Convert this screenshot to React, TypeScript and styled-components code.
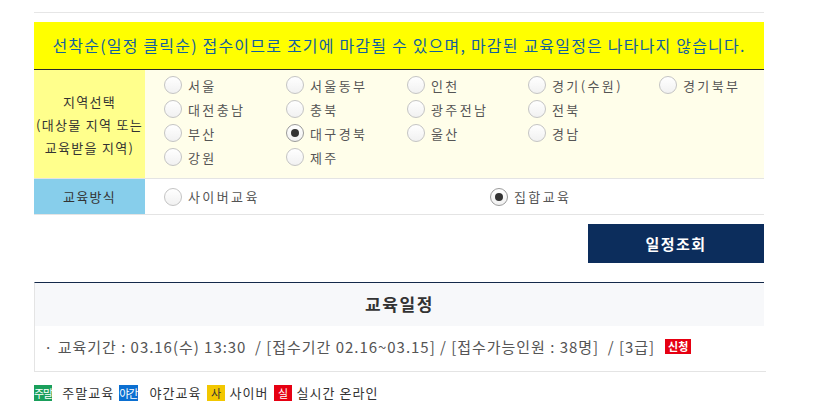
import React from "react";
import styled, { createGlobalStyle } from "styled-components";

const Global = createGlobalStyle`
  html, body { margin: 0; padding: 0; background: #fff; }
  body { font-family: "Noto Sans CJK KR", "Noto Sans", sans-serif; color: #333; overflow: hidden; letter-spacing: 0.1em; }
`;

const Page = styled.div`
  width: 730px;
  margin-left: 34px;
  padding-top: 12px;
`;

const TopRule = styled.div`
  height: 1px;
  background: #e6e6e6;
  margin-bottom: 9px;
`;

const Notice = styled.div`
  height: 48px;
  background: #ffff00;
  display: flex;
  align-items: center;
  justify-content: center;
  font-size: 16px;
  letter-spacing: 1.2px;
  color: #12609f;
  border-bottom: 1px solid #2b2b2b;
  padding-bottom: 1px;
  box-sizing: border-box;
`;

const FormRow = styled.div<{ $height: number }>`
  display: grid;
  grid-template-columns: 111px 1fr;
  height: ${(p) => p.$height}px;
  border-bottom: 1px solid #e4e4e4;
`;

const LabelCell = styled.div<{ $tone: "yellow" | "blue" }>`
  background: ${(p) => (p.$tone === "yellow" ? "#ffff8c" : "#87ceeb")};
  display: flex;
  align-items: center;
  justify-content: center;
  text-align: center;
  font-size: 13px;
  line-height: 23px;
  color: #333;
  letter-spacing: 1.3px;
  white-space: nowrap;
`;

const ValueCell = styled.div<{ $tone: "cream" | "white" }>`
  background: ${(p) => (p.$tone === "cream" ? "#fffeea" : "#fff")};
  padding: ${(p) => (p.$tone === "cream" ? "3px 0 0 19px" : "0 0 0 19px")};
  display: flex;
  flex-direction: column;
  justify-content: ${(p) => (p.$tone === "cream" ? "flex-start" : "center")};
`;

const OptionLine = styled.div<{ $cols: string }>`
  display: grid;
  grid-template-columns: ${(p) => p.$cols};
  height: 24px;
  align-items: center;
`;

const Option = styled.label`
  display: flex;
  align-items: center;
  gap: 6px;
  font-size: 13px;
  color: #555;
  cursor: pointer;
  letter-spacing: 2.4px;
  white-space: nowrap;
`;

const RadioCircle = styled.span<{ $checked: boolean }>`
  width: 18px;
  height: 18px;
  flex: none;
  box-sizing: border-box;
  border-radius: 50%;
  border: 1px solid ${(p) => (p.$checked ? "#9a9a9a" : "#c4c4c4")};
  background: linear-gradient(#ffffff, #f1f1f1);
  display: flex;
  align-items: center;
  justify-content: center;
  &::after {
    content: "";
    width: 8px;
    height: 8px;
    border-radius: 50%;
    background: #333;
    display: ${(p) => (p.$checked ? "block" : "none")};
  }
`;

const ButtonRow = styled.div`
  display: flex;
  justify-content: flex-end;
  padding-top: 9px;
`;

const SearchButton = styled.button`
  width: 176px;
  height: 39px;
  border: none;
  background: #0c2d5c;
  color: #fff;
  font-family: inherit;
  font-size: 15px;
  font-weight: 700;
  letter-spacing: 0.1em;
  cursor: pointer;
`;

const ScheduleBox = styled.div`
  margin-top: 19px;
  border-top: 1px solid #14294a;
  border-left: 1px solid #e4e4e4;
`;

const ScheduleHead = styled.div`
  height: 43px;
  box-sizing: border-box;
  padding-bottom: 3px;
  background: #f7f8fa;
  display: flex;
  align-items: center;
  justify-content: center;
  font-size: 17px;
  font-weight: 700;
  color: #333;
`;

const ScheduleItem = styled.div`
  height: 46px;
  box-sizing: border-box;
  padding-bottom: 4px;
  border-bottom: 1px solid #e4e4e4;
  margin-right: -2px;
  display: flex;
  align-items: center;
  padding-left: 9px;
  font-size: 15px;
  color: #555;
  white-space: pre;
  letter-spacing: 0.97px;
`;

const ApplyBadge = styled.span`
  margin-left: 10px;
  background: #e60012;
  color: #fff;
  font-size: 11px;
  font-weight: 700;
  letter-spacing: 0;
  padding: 0 3px;
  height: 15px;
  line-height: 15px;
`;

const Legend = styled.div`
  display: flex;
  align-items: center;
  margin-top: 11px;
  font-size: 13px;
  color: #333;
`;

const LegendBadge = styled.span<{ $bg: string; $fg: string }>`
  min-width: 18px;
  height: 16px;
  line-height: 16px;
  text-align: center;
  font-size: 11px;
  background: ${(p) => p.$bg};
  color: ${(p) => p.$fg};
  letter-spacing: -1px;
`;

const LegendText = styled.span<{ $gap: number }>`
  margin-left: ${(p) => p.$gap}px;
  margin-right: 5px;
  letter-spacing: 0.08em;
`;

const FaintLine = styled.div`
  padding-left: 601px;
  margin-top: 3px;
  font-size: 16px;
  color: #c8c8c8;
`;

type Region = { name: string; checked?: boolean };

const regionRows: Region[][] = [
  [{ name: "서울" }, { name: "서울동부" }, { name: "인천" }, { name: "경기(수원)" }, { name: "경기북부" }],
  [{ name: "대전충남" }, { name: "충북" }, { name: "광주전남" }, { name: "전북" }],
  [{ name: "부산" }, { name: "대구경북", checked: true }, { name: "울산" }, { name: "경남" }],
  [{ name: "강원" }, { name: "제주" }],
];

const legend = [
  { badge: "주말", bg: "#1a9f5b", fg: "#fff", label: "주말교육", gap: 10 },
  { badge: "야간", bg: "#0b6fd1", fg: "#fff", label: "야간교육", gap: 12 },
  { badge: "사", bg: "#f2c700", fg: "#333", label: "사이버", gap: 5 },
  { badge: "실", bg: "#e60012", fg: "#fff", label: "실시간 온라인", gap: 5 },
];

export default function App() {
  return (
    <>
      <Global />
      <Page>
        <TopRule />
        <Notice>선착순(일정 클릭순) 접수이므로 조기에 마감될 수 있으며, 마감된 교육일정은 나타나지 않습니다.</Notice>
        <FormRow $height={108}>
          <LabelCell $tone="yellow">
            지역선택
            <br />
            (대상물 지역 또는
            <br />
            교육받을 지역)
          </LabelCell>
          <ValueCell $tone="cream">
            {regionRows.map((row, i) => (
              <OptionLine key={i} $cols="122px 121px 121px 131px 1fr">
                {row.map((r) => (
                  <Option key={r.name}>
                    <RadioCircle $checked={!!r.checked} />
                    {r.name}
                  </Option>
                ))}
              </OptionLine>
            ))}
          </ValueCell>
        </FormRow>
        <FormRow $height={35}>
          <LabelCell $tone="blue">교육방식</LabelCell>
          <ValueCell $tone="white">
            <OptionLine $cols="326px 1fr">
              <Option>
                <RadioCircle $checked={false} />
                사이버교육
              </Option>
              <Option>
                <RadioCircle $checked={true} />
                집합교육
              </Option>
            </OptionLine>
          </ValueCell>
        </FormRow>
        <ButtonRow>
          <SearchButton>일정조회</SearchButton>
        </ButtonRow>
        <ScheduleBox>
          <ScheduleHead>교육일정</ScheduleHead>
          <ScheduleItem>
            {"· 교육기간 : 03.16(수) 13:30  / [접수기간 02.16~03.15] / [접수가능인원 : 38명]  / [3급]"}
            <ApplyBadge>신청</ApplyBadge>
          </ScheduleItem>
        </ScheduleBox>
        <Legend>
          {legend.map((l) => (
            <React.Fragment key={l.badge}>
              <LegendBadge $bg={l.bg} $fg={l.fg}>{l.badge}</LegendBadge>
              <LegendText $gap={l.gap}>{l.label}</LegendText>
            </React.Fragment>
          ))}
        </Legend>
        <FaintLine>다른 일정</FaintLine>
      </Page>
    </>
  );
}
